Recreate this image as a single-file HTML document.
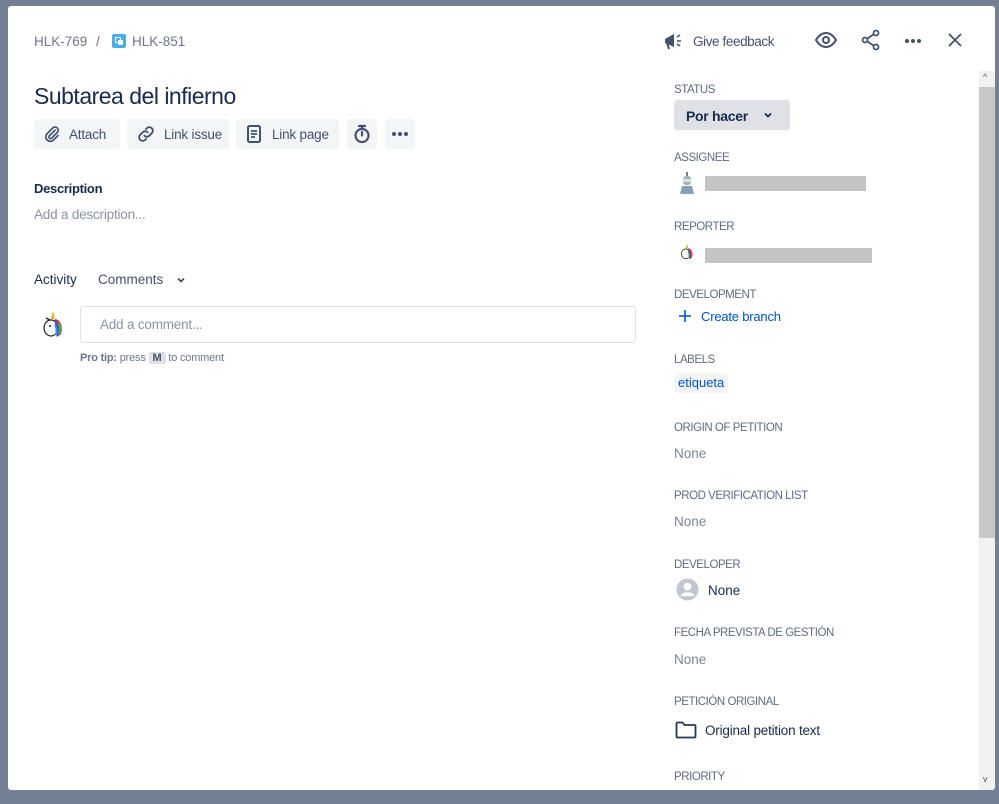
<!DOCTYPE html>
<html><head><meta charset="utf-8"><style>
*{margin:0;padding:0;box-sizing:border-box}
body{width:999px;height:804px;background:#737f94;font-family:"Liberation Sans",sans-serif;position:relative;overflow:hidden;color:#172b4d}
.modal{position:absolute;left:8px;top:6px;width:987px;height:784px;background:#fff;border-radius:3px;overflow:hidden}
.a{position:absolute;white-space:nowrap}
.lbl{font-size:11.5px;color:#5e6c84;letter-spacing:-0.45px}
.none{font-size:13.5px;color:#7a869a}
.btn{position:absolute;top:113px;height:30px;background:#f4f5f7;border-radius:3px;font-size:13.5px;color:#42526e;display:flex;align-items:center;letter-spacing:-0.2px}
.bar{position:absolute;background:#c4c4c4;height:15px}
</style></head><body>
<div class="modal">
<div class="a" style="left:26px;top:28px;font-size:13.5px;color:#6b778c">HLK-769</div>
<div class="a" style="left:88px;top:28px;font-size:13.5px;color:#6b778c">/</div>
<div class="a" style="left:104px;top:28px;width:14px;height:14px;background:#4bade8;border-radius:2px"><div style="position:absolute;left:3px;top:3px;width:6px;height:6px;border:1.5px solid #fff;border-radius:1px"></div><div style="position:absolute;left:6px;top:6px;width:5px;height:5px;background:#fff;border-radius:1px"></div></div>
<div class="a" style="left:124px;top:28px;font-size:13.5px;color:#6b778c">HLK-851</div>
<div class="a" style="left:26px;top:77px;font-size:23px;color:#172b4d;letter-spacing:-0.5px">Subtarea del infierno</div>
<div class="btn" style="left:26px;width:86px"><svg style="margin-left:9px" width="18" height="18" viewBox="0 0 24 24"><path d="M16 7l-7.5 7.5a2 2 0 0 0 3 3L19 10a4 4 0 0 0-6-6l-7.5 7.5a6 6 0 0 0 8.5 8.5L20 14" fill="none" stroke="#42526e" stroke-width="2.2" stroke-linecap="round"/></svg><span style="margin-left:8px">Attach</span></div>
<div class="btn" style="left:119px;width:102px"><svg style="margin-left:9px" width="20" height="20" viewBox="0 0 24 24"><path d="M10 14a4 4 0 0 0 6 0l3-3a4 4 0 0 0-6-6l-1 1M14 10a4 4 0 0 0-6 0l-3 3a4 4 0 0 0 6 6l1-1" fill="none" stroke="#42526e" stroke-width="2.2" stroke-linecap="round"/></svg><span style="margin-left:8px">Link issue</span></div>
<div class="btn" style="left:228px;width:103px"><svg style="margin-left:10px" width="16" height="20" viewBox="0 0 16 20"><rect x="2" y="2" width="12" height="16" rx="1.5" fill="none" stroke="#42526e" stroke-width="2"/><path d="M5 7h6M5 10h6M5 13h4" stroke="#42526e" stroke-width="1.8"/></svg><span style="margin-left:10px">Link page</span></div>
<div class="btn" style="left:339px;width:30px;justify-content:center"><svg width="18" height="20" viewBox="0 0 18 20"><circle cx="9" cy="11.5" r="6.5" fill="none" stroke="#42526e" stroke-width="2.2"/><path d="M6 2h6M9 2v3M9 11.5V8" stroke="#42526e" stroke-width="2.2" stroke-linecap="round"/></svg></div>
<div class="btn" style="left:377px;width:30px;justify-content:center"><svg width="18" height="6" viewBox="0 0 18 6"><circle cx="3" cy="3" r="2" fill="#42526e"/><circle cx="9" cy="3" r="2" fill="#42526e"/><circle cx="15" cy="3" r="2" fill="#42526e"/></svg></div>
<div class="a" style="left:26px;top:175px;font-size:13px;font-weight:bold;color:#172b4d;letter-spacing:-0.3px">Description</div>
<div class="a" style="left:26px;top:201px;font-size:13.5px;color:#8993a4;letter-spacing:-0.2px">Add a description...</div>
<div class="a" style="left:26px;top:266px;font-size:13.5px;color:#172b4d">Activity</div>
<div class="a" style="left:90px;top:266px;font-size:13.5px;color:#42526e">Comments</div>
<svg class="a" style="left:167px;top:268px" width="12" height="12" viewBox="0 0 12 12"><path d="M3 4.5l3 3 3-3" fill="none" stroke="#42526e" stroke-width="1.8"/></svg>
<div class="a" style="left:32px;top:304px;width:26px;height:30px">
<svg width="26" height="30" viewBox="0 0 26 30"><path d="M13 1l2 8h-4z" fill="#e8b400"/><ellipse cx="11" cy="18" rx="7" ry="8" fill="#fff" stroke="#222" stroke-width="1.2"/><path d="M15 9c6 1 8 8 6 15l-4 3c-2-4 0-9-2-12z" fill="#7b2fbf"/><path d="M17 11c4 3 4 8 2 13" stroke="#e33" stroke-width="2" fill="none"/><path d="M18 13c3 3 2 8 1 11" stroke="#2c2" stroke-width="2" fill="none"/><path d="M15 15c2 3 2 6 1 10" stroke="#29f" stroke-width="2" fill="none"/><circle cx="10" cy="16" r="1" fill="#222"/><path d="M6 8l4 2" stroke="#222" stroke-width="1.5"/></svg></div>
<div class="a" style="left:72px;top:300px;width:556px;height:37px;border:1px solid #dfe1e6;border-radius:3px"></div>
<div class="a" style="left:92px;top:311px;font-size:13.5px;color:#8993a4;letter-spacing:-0.2px">Add a comment...</div>
<div class="a" style="left:72px;top:346px;font-size:11px;color:#6b778c;letter-spacing:-0.2px"><b>Pro tip:</b> press <span style="background:#dfe1e6;border-radius:2px;padding:0 4px;font-weight:bold;color:#42526e">M</span> to comment</div>

<svg class="a" style="left:654px;top:24px" width="22" height="22" viewBox="0 0 22 22"><path d="M3 9l9-5v13l-9-4z" fill="#42526e"/><path d="M5 13l2 6" stroke="#42526e" stroke-width="2"/><path d="M15 7l3-2M15 11h4M15 14l3 2" stroke="#42526e" stroke-width="1.6"/></svg>
<div class="a" style="left:685px;top:28px;font-size:13.5px;color:#42526e;letter-spacing:-0.4px">Give feedback</div>
<svg class="a" style="left:806px;top:24px" width="24" height="20" viewBox="0 0 24 20"><path d="M2 10c3-5 6.5-7 10-7s7 2 10 7c-3 5-6.5 7-10 7S5 15 2 10z" fill="none" stroke="#42526e" stroke-width="2"/><circle cx="12" cy="10" r="3" fill="none" stroke="#42526e" stroke-width="2"/></svg>
<svg class="a" style="left:853px;top:23px" width="20" height="22" viewBox="0 0 20 22"><circle cx="15" cy="4" r="2.5" fill="none" stroke="#42526e" stroke-width="1.8"/><circle cx="4" cy="11" r="2.5" fill="none" stroke="#42526e" stroke-width="1.8"/><circle cx="15" cy="18" r="2.5" fill="none" stroke="#42526e" stroke-width="1.8"/><path d="M6.2 9.8l6.6-4.5M6.2 12.2l6.6 4.5" stroke="#42526e" stroke-width="1.8"/></svg>
<svg class="a" style="left:896px;top:32px" width="18" height="6" viewBox="0 0 18 6"><circle cx="3" cy="3" r="2" fill="#42526e"/><circle cx="9" cy="3" r="2" fill="#42526e"/><circle cx="15" cy="3" r="2" fill="#42526e"/></svg>
<svg class="a" style="left:939px;top:26px" width="16" height="16" viewBox="0 0 16 16"><path d="M2 2l12 12M14 2L2 14" stroke="#42526e" stroke-width="1.8"/></svg>

<div class="a" style="left:971px;top:65px;width:16px;height:719px;background:#f1f1f1"></div>
<div class="a" style="left:971px;top:81px;width:16px;height:451px;background:#c8c8c8"></div>
<div class="a" style="left:975px;top:66px;font-size:9px;color:#555">^</div>
<div class="a" style="left:975px;top:768px;font-size:9px;color:#555">v</div>

<div class="a lbl" style="left:666px;top:78px">STATUS</div>
<div class="a" style="left:666px;top:94px;width:116px;height:30px;background:#dfe1e6;border-radius:3px;font-size:14px;font-weight:bold;color:#172b4d;padding:8px 12px;letter-spacing:-0.3px">Por hacer</div>
<svg class="a" style="left:754px;top:103px" width="12" height="12" viewBox="0 0 12 12"><path d="M3 4.5l3 3 3-3" fill="none" stroke="#172b4d" stroke-width="1.8"/></svg>
<div class="a lbl" style="left:666px;top:146px">ASSIGNEE</div>
<svg class="a" style="left:670px;top:166px" width="18" height="22" viewBox="0 0 18 22"><path d="M9 0v4" stroke="#555" stroke-width="1.5"/><rect x="5" y="4" width="8" height="9" rx="3" fill="#9fb3c4"/><rect x="5" y="7" width="8" height="3" fill="#ddd"/><path d="M2 22l2-8h10l2 8z" fill="#8aa1b5"/></svg>
<div class="bar" style="left:697px;top:170px;width:161px"></div>
<div class="a lbl" style="left:666px;top:215px">REPORTER</div>
<svg class="a" style="left:671px;top:235px" width="16" height="22" viewBox="0 0 26 30"><path d="M13 1l2 8h-4z" fill="#e8b400"/><ellipse cx="11" cy="18" rx="7" ry="8" fill="#fff" stroke="#222" stroke-width="1.2"/><path d="M15 9c6 1 8 8 6 15l-4 3c-2-4 0-9-2-12z" fill="#7b2fbf"/><path d="M17 11c4 3 4 8 2 13" stroke="#e33" stroke-width="2" fill="none"/><path d="M15 15c2 3 2 6 1 10" stroke="#2c2" stroke-width="2" fill="none"/></svg>
<div class="bar" style="left:697px;top:242px;width:167px"></div>
<div class="a lbl" style="left:666px;top:283px">DEVELOPMENT</div>
<svg class="a" style="left:670px;top:303px" width="14" height="14" viewBox="0 0 14 14"><path d="M7 1v12M1 7h12" stroke="#0052cc" stroke-width="1.6"/></svg>
<div class="a" style="left:693px;top:303px;font-size:13px;color:#0052cc;letter-spacing:-0.2px">Create branch</div>
<div class="a lbl" style="left:666px;top:348px">LABELS</div>
<div class="a" style="left:666px;top:367px;height:20px;background:#f4f5f7;border-radius:3px;font-size:13px;color:#0052cc;padding:2px 4px">etiqueta</div>
<div class="a lbl" style="left:666px;top:416px">ORIGIN OF PETITION</div>
<div class="a none" style="left:666px;top:440px">None</div>
<div class="a lbl" style="left:666px;top:484px">PROD VERIFICATION LIST</div>
<div class="a none" style="left:666px;top:508px">None</div>
<div class="a lbl" style="left:666px;top:553px">DEVELOPER</div>
<svg class="a" style="left:668px;top:572px" width="23" height="23" viewBox="0 0 24 24"><circle cx="12" cy="12" r="11.5" fill="#c1c7d0"/><circle cx="12" cy="9" r="4" fill="#fff"/><path d="M5 18c2-4 12-4 14 0v1H5z" fill="#fff"/></svg>
<div class="a" style="left:700px;top:577px;font-size:13.5px;color:#172b4d">None</div>
<div class="a lbl" style="left:666px;top:621px">FECHA PREVISTA DE GESTIÓN</div>
<div class="a none" style="left:666px;top:646px">None</div>
<div class="a lbl" style="left:666px;top:690px">PETICIÓN ORIGINAL</div>
<svg class="a" style="left:667px;top:715px" width="22" height="18" viewBox="0 0 22 18"><path d="M1.5 2.5a1 1 0 0 1 1-1h5l2 2.5h10a1 1 0 0 1 1 1v10.5a1 1 0 0 1-1 1h-17a1 1 0 0 1-1-1z" fill="none" stroke="#253858" stroke-width="1.8"/></svg>
<div class="a" style="left:697px;top:717px;font-size:13.5px;color:#172b4d;letter-spacing:-0.2px">Original petition text</div>
<div class="a lbl" style="left:666px;top:765px">PRIORITY</div>
</div>
</body></html>
